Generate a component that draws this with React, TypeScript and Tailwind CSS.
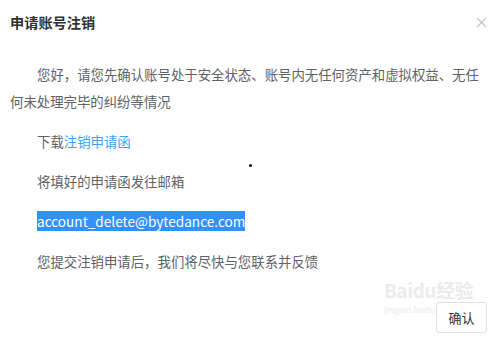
import React from 'react';

const font = { fontFamily: '"Noto Sans CJK SC", "Noto Sans", sans-serif' };

export default function App() {
  return (
    <div className="relative w-[500px] h-[341px] bg-white overflow-hidden" style={font}>
      {/* Header */}
      <div className="flex items-center justify-between h-[44px] pl-[10px] pr-[12px]">
        <h2 className="text-[14.2px] font-bold text-[#303133] leading-none">申请账号注销</h2>
        <button className="w-[14px] h-[14px] flex items-center justify-center text-[#c0c4cc]">
          <svg width="11" height="11" viewBox="0 0 11 11" fill="none" stroke="currentColor" strokeWidth="1.2">
            <path d="M1 1L10 10M10 1L1 10" />
          </svg>
        </button>
      </div>

      {/* Body */}
      <div className="pl-[10px] w-[486px] pt-[17px] text-[13.4px] leading-[27px] text-[#606266] flex flex-col gap-[13px]">
        <p className="indent-[27px]">
          您好，请您先确认账号处于安全状态、账号内无任何资产和虚拟权益、无任何未处理完毕的纠纷等情况
        </p>
        <p className="indent-[27px]">
          下载<span className="text-[#409eff]">注销申请函</span>
        </p>
        <p className="indent-[27px]">将填好的申请函发往邮箱</p>
        <p className="indent-[27px]">
          <span className="bg-[#3390ff] text-white text-[13.6px]">account_delete@bytedance.com</span>
        </p>
        <p className="indent-[27px]">您提交注销申请后，我们将尽快与您联系并反馈</p>
      </div>

      {/* Stray dot */}
      <div className="absolute left-[249px] top-[164px] w-[3px] h-[3px] rounded-full bg-black" />

      {/* Watermark */}
      <div className="absolute left-[384px] top-[280px] flex flex-col items-start text-[#ebebeb] leading-none">
        <span className="text-[19px] font-bold tracking-tight">Baidu经验</span>
        <span className="text-[8px] mt-[7px]">jingyan.baidu</span>
      </div>

      {/* Footer button */}
      <button className="absolute left-[436px] top-[302px] w-[51px] h-[31px] border border-[#dcdfe6] rounded-[3px] bg-white text-[13px] text-[#303133] flex items-center justify-center">
        确认
      </button>
    </div>
  );
}
